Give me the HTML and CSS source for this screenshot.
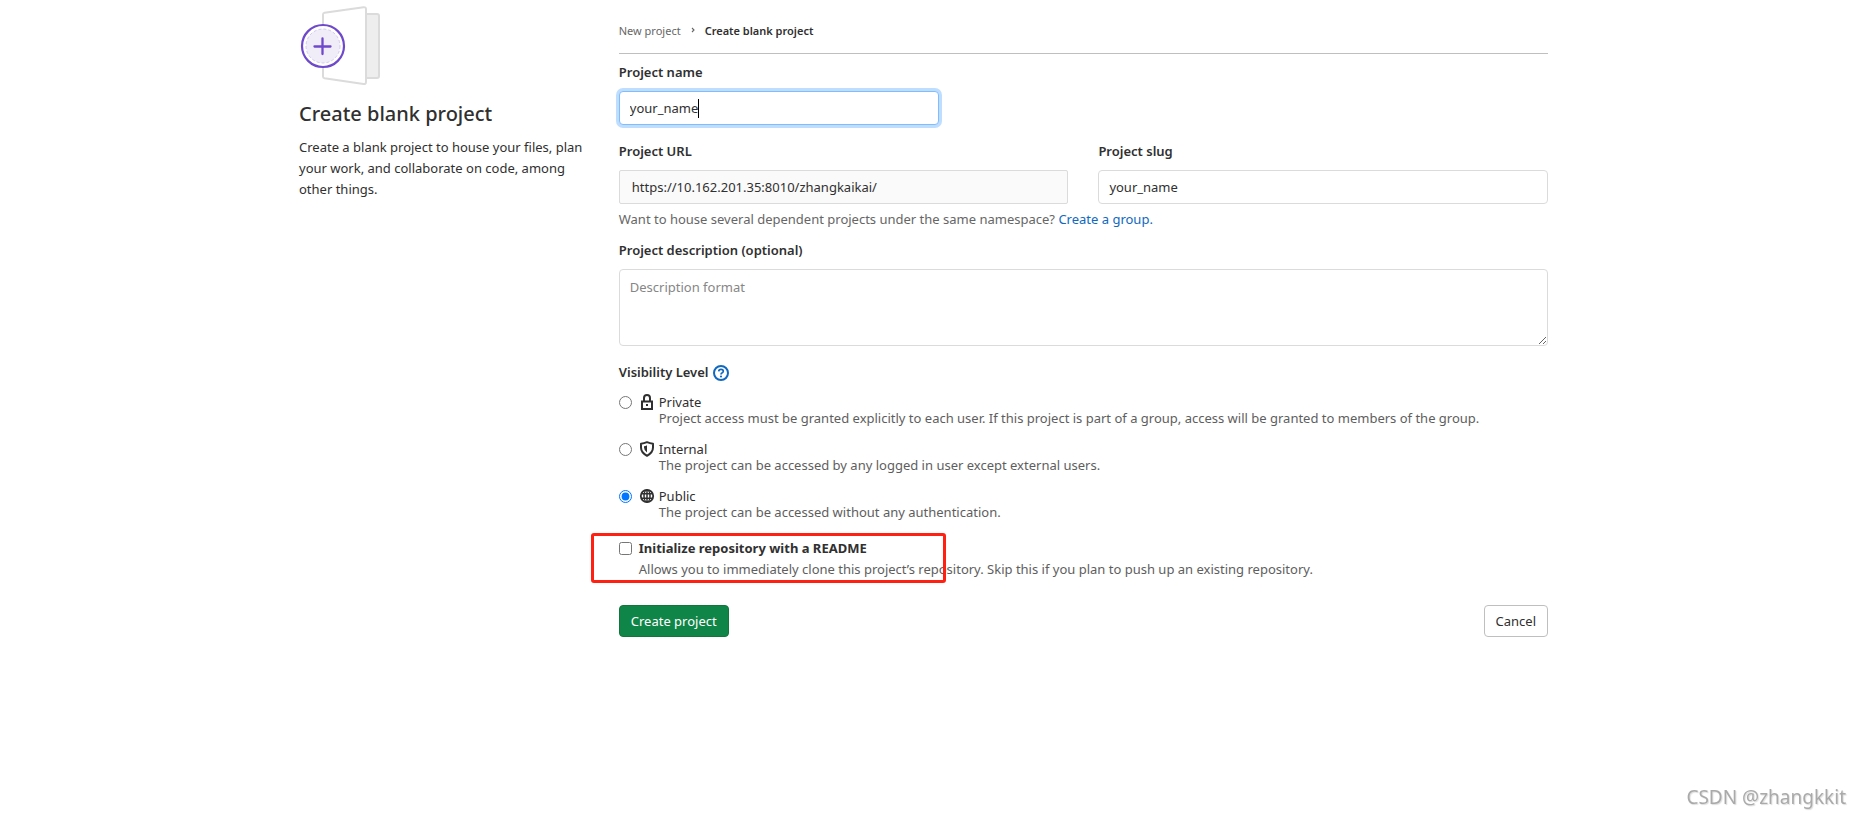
FILE: index.html
```
<!DOCTYPE html>
<html lang="en">
<head>
<meta charset="utf-8">
<title>Create blank project</title>
<link rel="stylesheet" href="styles.css">
</head>
<body>
<div class="page">
  <aside class="intro">
    <svg class="intro-art" width="82" height="82" viewBox="-1 0 82 82" aria-hidden="true">
      <rect x="57" y="9" width="22" height="64" rx="2" fill="#eee" stroke="#dbdbdb" stroke-width="2"/>
      <path d="M23 9.500Q23 8 24.500 7.700L63.500 2.200Q66 2 66 4V77Q66 79.300 63.500 79L24.500 73.300Q23 73 23 71.500Z" fill="#fff" stroke="#dbdbdb" stroke-width="2"/>
      <circle cx="23" cy="41" r="21" fill="#fff" stroke="#6e49cb" stroke-width="2.200"/>
      <circle cx="23" cy="41" r="17" fill="#f0edf8" stroke="#c9bfe8" stroke-width="0.800" stroke-dasharray="3 2"/>
      <path d="M22.500 33.500V49M14.500 41.500H30.500" fill="none" stroke="#6e49cb" stroke-width="2.300" stroke-linecap="round"/>
    </svg>
    <h1 class="intro-title">Create blank project</h1>
    <p class="intro-text">Create a blank project to house your files, plan your work, and collaborate on code, among other things.</p>
  </aside>
  <main class="content">
    <nav class="breadcrumb" aria-label="Breadcrumb">
      <a class="crumb" href="#">New project</a>
      <svg class="crumb-arrow" width="8" height="8" viewBox="0 0 8 8" aria-hidden="true"><path d="M3 1L5 3L3 5" fill="none" stroke="#666" stroke-width="1.100"/></svg>
      <a class="crumb crumb-current" href="#" aria-current="page">Create blank project</a>
    </nav>
    <form class="form">
      <div class="group">
        <label class="label" for="name">Project name</label>
        <div class="name-field">
          <input class="input input-focus" id="name" type="text" value="your_name" autofocus>
          <span class="caret-line" aria-hidden="true"><span class="caret-space">your_name</span></span>
        </div>
      </div>
      <div class="group group-tight">
        <div class="columns">
          <div>
            <label class="label" for="url">Project URL</label>
            <input class="input input-static" id="url" type="text" value="https://10.162.201.35:8010/zhangkaikai/" readonly>
          </div>
          <div>
            <label class="label" for="slug">Project slug</label>
            <input class="input" id="slug" type="text" value="your_name">
          </div>
        </div>
        <p class="hint">Want to house several dependent projects under the same namespace? <a class="link" href="#">Create a group.</a></p>
      </div>
      <div class="group">
        <label class="label" for="description">Project description (optional)</label>
        <textarea class="input textarea" id="description" placeholder="Description format"></textarea>
      </div>
      <fieldset class="visibility">
        <legend class="legend">Visibility Level
          <a class="help" href="#" aria-label="Help"><svg width="16" height="16" viewBox="0 0 16 16"><circle cx="8" cy="8" r="7" fill="none" stroke="#1068bf" stroke-width="2"/><path d="M5.700 6.300Q5.900 4.400 8 4.400Q10.300 4.400 10.300 6.200Q10.300 7.200 9.200 7.800Q8 8.400 8 9.500" fill="none" stroke="#1068bf" stroke-width="1.700"/><circle cx="8" cy="11.500" r="1.100" fill="#1068bf"/></svg></a>
        </legend>
        <div class="option">
          <input class="tick" type="radio" name="visibility" id="private">
          <svg class="icon" width="16" height="16" viewBox="0 0 16 16" aria-hidden="true"><path d="M3 7.500H13V15H3ZM5 7.500V4Q5 1 8 1Q11 1 11 4V7.500" fill="none" stroke="#303030" stroke-width="2"/><rect x="7" y="10" width="2" height="2" fill="#303030"/></svg>
          <div class="option-body"><label for="private">Private</label><p class="option-text">Project access must be granted explicitly to each user. If this project is part of a group, access will be granted to members of the group.</p></div>
        </div>
        <div class="option">
          <input class="tick" type="radio" name="visibility" id="internal">
          <svg class="icon" width="16" height="16" viewBox="0 0 16 16" aria-hidden="true"><path d="M8 1.200Q11 2.500 14 2.700V6.500Q14 11.500 8 14.800Q2 11.500 2 6.500V2.700Q5 2.500 8 1.200Z" fill="none" stroke="#303030" stroke-width="2" stroke-linejoin="round"/><path d="M8 4.200V11.500Q5 9.500 5 6.500V5.200Q6.500 5 8 4.200Z" fill="#303030"/></svg>
          <div class="option-body"><label for="internal">Internal</label><p class="option-text">The project can be accessed by any logged in user except external users.</p></div>
        </div>
        <div class="option">
          <input class="tick" type="radio" name="visibility" id="public" checked>
          <svg class="icon" width="16" height="16" viewBox="0 0 16 16" aria-hidden="true"><g fill="none" stroke="#303030"><circle cx="8" cy="8" r="6.200" stroke-width="1.800"/><ellipse cx="8" cy="8" rx="3" ry="6" stroke-width="1.500"/><path d="M8 2V14M2.500 5.700H13.500M2.500 10.300H13.500" stroke-width="1.500"/></g></svg>
          <div class="option-body"><label for="public">Public</label><p class="option-text">The project can be accessed without any authentication.</p></div>
        </div>
      </fieldset>
      <div class="readme">
        <input class="tick" type="checkbox" id="readme">
        <div class="readme-body"><label class="readme-label" for="readme">Initialize repository with a README</label><p class="readme-text">Allows you to immediately clone this project’s repository. Skip this if you plan to push up an existing repository.</p></div>
        <div class="highlight"></div>
      </div>
      <div class="actions">
        <button class="button button-primary" type="submit">Create project</button>
        <button class="button" type="button">Cancel</button>
      </div>
    </form>
  </main>
</div>
<div class="watermark">CSDN @zhangkkit</div>
</body>
</html>
```
FILE: styles.css
```
* { box-sizing: border-box; }
body {
  margin: 0;
  padding-right: 12px;
  background: #fff;
  color: #303030;
  font: 13px/21px "Noto Sans", "Open Sans", sans-serif;
}
p { margin: 0; }
a { text-decoration: none; }
.page {
  display: grid;
  grid-template-columns: 1fr 3fr;
  max-width: 1280px;
  margin: 0 auto;
  padding-right: 1px;
}
.intro { padding: 5px 15px 0; }
.intro-art { display: block; }
.intro-title { margin: 12px 0 8px; font-size: 20px; line-height: 30px; font-weight: 500; }
.content { padding: 20px 15px 0; }
.breadcrumb {
  display: flex;
  align-items: center;
  gap: 8px;
  padding-bottom: 12px;
  border-bottom: 1px solid #bfbfbf;
  font-size: 11px;
}
.crumb { color: #666; }
.crumb-current { color: #303030; font-weight: 600; }
.form { padding-top: 8px; }
.group { margin-bottom: 16px; }
.group-tight { margin-bottom: 10px; }
.label { display: block; margin-bottom: 8px; font-weight: 600; }
.name-field { position: relative; width: 320px; max-width: 100%; }
.caret-line {
  position: absolute;
  top: 8px;
  left: 11px;
  border-right: 1px solid #000;
  line-height: 19px;
  pointer-events: none;
}
.caret-space { visibility: hidden; }
.columns { display: grid; grid-template-columns: 1fr 1fr; gap: 30px; }
.input {
  display: block;
  width: 100%;
  height: 34px;
  padding: 0 10px;
  border: 1px solid #dbdbdb;
  border-radius: 4px;
  outline: 0;
  background: #fff;
  color: #303030;
  font: inherit;
}
.input::placeholder { color: #868686; }
.input-focus { border-color: #80bdff; box-shadow: 0 0 0 3px #bfdeff; caret-color: transparent; }
.input-static { padding: 0 12px; border-radius: 2px; background: #fafafa; }
.hint { margin-top: 5px; color: #666; }
.link { color: #1068bf; }
.textarea { height: 77px; padding: 7px 10px; line-height: 20px; resize: vertical; }
.visibility { margin: 0; padding: 0; border: 0; }
.legend { display: flex; align-items: center; gap: 4px; padding: 0; margin-bottom: 11px; font-weight: 600; }
.help { display: flex; }
.option { display: flex; margin-bottom: 15px; line-height: 16px; }
.tick { flex: none; width: 13px; height: 13px; margin: 2px 7px 0 0; }
.icon { flex: none; margin-right: 4px; }
.option-text { color: #5e5e5e; }
.readme { position: relative; display: flex; margin-top: 3px; }
.readme .tick { margin-top: 4px; }
.readme-label { font-weight: 700; }
.readme-text { color: #5e5e5e; }
.highlight {
  position: absolute;
  top: -5px;
  left: -28px;
  width: 355px;
  height: 50px;
  border: 3px solid #ff2011;
  border-radius: 3px;
  pointer-events: none;
}
.actions { display: flex; justify-content: space-between; margin-top: 25px; }
.button {
  height: 32px;
  padding: 0 11px;
  border: 1px solid #bfbfbf;
  border-radius: 4px;
  background: #fff;
  color: #303030;
  font: inherit;
}
.button-primary { border-color: #12753a; background: #108548; color: #fff; }
.watermark {
  position: fixed;
  right: 14px;
  bottom: 8px;
  color: #aaa;
  font-size: 19px;
  line-height: 28px;
  text-shadow: 1px 1px 1px #ddd;
}
```
